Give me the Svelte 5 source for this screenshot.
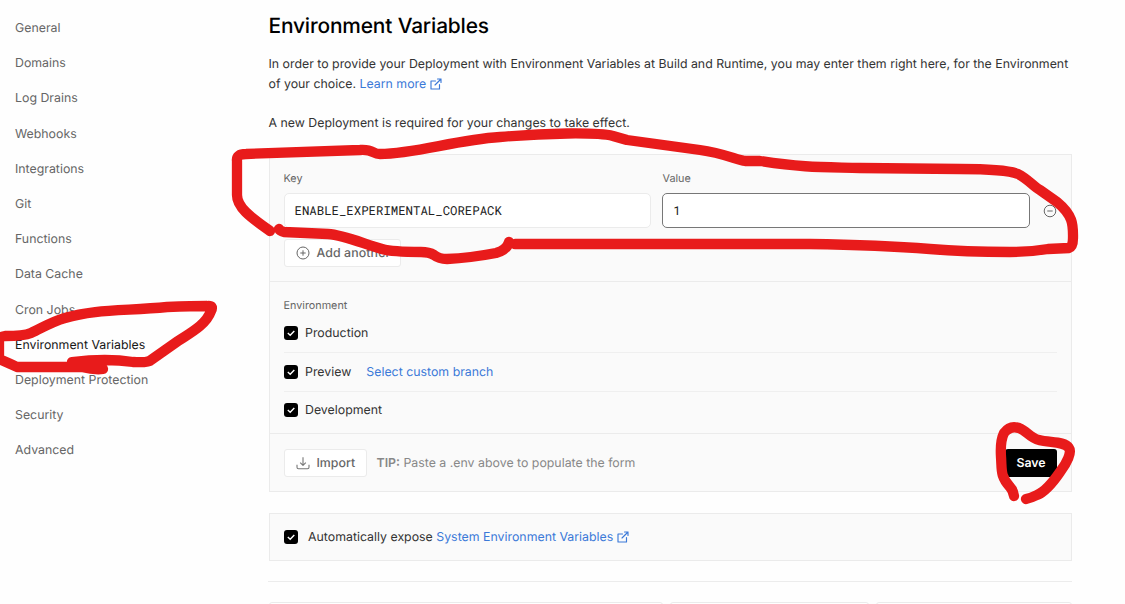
<script>
  const nav = ['General', 'Domains', 'Log Drains', 'Webhooks', 'Integrations', 'Git', 'Functions', 'Data Cache', 'Cron Jobs', 'Environment Variables', 'Deployment Protection', 'Security', 'Advanced'];
  const active = 'Environment Variables';
  const environments = [
    { name: 'Production' },
    { name: 'Preview', link: 'Select custom branch' },
    { name: 'Development' }
  ];
  const strokes = [
    'M270 231 C252 218 237 208 237 195 L237 161 Q236 154 246 154 L360 150 C374 149 372 154 380 154 C415 154 455 140 500 137 C545 133 597 132 613 136 L627 140 L700 150 C723 153 737 160 745 161 L760 161 C805 168 825 167 860 168 L960 169 Q1006 169 1018 174 C1028 179 1033 186 1040 190 L1057 202 C1074 216 1073 226 1073 238 Q1073 247 1069 248 L1048 249 Q1030 252 1010 252 Q965 252 930 249 Q880 245 810 244 L515 244',
    'M509 242 Q507 250 496 253 Q470 258 447 259 Q439 259 434 255 Q429 252 421 252 Q392 252 382 249 C364 244 344 235 328 234 L284 232 Q280 231 279 229',
    'M103 369 Q94 370 82 367 L67 367 L17 367 Q11 364 -1 359 L-1 341 Q-1 337 5 336 Q24 336 31 333 C42 328 51 322 65 318 C94 309 125 311 167 307 Q193 306 207 306 Q214 305 211 311 C206 325 190 333 178 341 L151 360 Q148 363 133 362 Q107 358 72 362',
    'M1014 496 Q1013 490 1010 487 C1000 476 1002 470 1001 457 Q1000 441 1004 433 Q1010 425 1019 428 C1027 431 1030 438 1039 440 C1050 443 1064 441 1069 448 C1072 452 1067 463 1060 472 Q1047 491 1037 495 Q1031 498 1026 499'
  ];
</script>

{#snippet external()}
  <svg class="ext" viewBox="0 0 24 24" fill="none" stroke="currentColor" stroke-width="2.3" stroke-linecap="round" stroke-linejoin="round"><path d="M19 13v9H2V6h9M15 2h7v7M10 14 22 2" /></svg>
{/snippet}

{#snippet check()}
  <span class="check"><svg viewBox="0 0 14 14" fill="none" stroke="#fff" stroke-width="1.4"><path d="M3.8 7 6.2 9.2 10.3 4.9" /></svg></span>
{/snippet}

<div class="page">
  <nav>
    {#each nav as item}
      <a class:active={item === active}>{item}</a>
    {/each}
  </nav>

  <main>
    <h1>Environment Variables</h1>
    <p class="intro">In order to provide your Deployment with Environment Variables at Build and Runtime, you may enter them right here, for the Environment<br />of your choice. <a class="link">Learn more {@render external()}</a></p>
    <p class="notice">A new Deployment is required for your changes to take effect.</p>

    <section class="card">
      <div class="fields">
        <div class="labels"><span>Key</span><span>Value</span></div>
        <div class="inputs">
          <div class="input mono">ENABLE_EXPERIMENTAL_COREPACK</div>
          <div class="input focus mono">1</div>
          <svg class="minus" viewBox="0 0 14 14" fill="none" stroke="#666" stroke-width="1"><circle cx="7" cy="7" r="5.8" /><path d="M4.3 7h5.4" /></svg>
        </div>
        <div class="button add">
          <svg viewBox="0 0 14 14" fill="none" stroke="#666" stroke-width="1"><circle cx="7" cy="7" r="6" /><path d="M4.3 7h5.4M7 4.3v5.4" /></svg>
          <span>Add another</span>
        </div>
      </div>
      <div class="envs">
        <span class="label">Environment</span>
        {#each environments as env}
          <div class="env">
            {@render check()}
            <span class="name">{env.name}</span>
            {#if env.link}<a class="link">{env.link}</a>{/if}
          </div>
        {/each}
      </div>
      <footer>
        <div class="button import">
          <svg viewBox="0 0 14 14" fill="none" stroke="#777" stroke-width="1.1" stroke-linejoin="round"><path d="M1 8.7v2.6q0 1.5 1.5 1.5h9q1.5 0 1.5-1.5V8.7M7 1.3v8M4.2 6.6 7 9.4l2.8-2.8" /></svg>
          <span>Import</span>
        </div>
        <span class="tip"><b>TIP:</b> Paste a .env above to populate the form</span>
        <div class="save"><span>Save</span></div>
      </footer>
    </section>

    <section class="expose">
      {@render check()}
      <span class="text">Automatically expose <a class="link">System Environment Variables {@render external()}</a></span>
    </section>

    <hr />
    <div class="filters"><i></i><i></i><i></i></div>
  </main>

  <svg class="ink" viewBox="0 0 1125 604" fill="none" stroke="#e81b1b" stroke-width="10.3" stroke-linecap="round" stroke-linejoin="round">
    {#each strokes as d}<path {d} />{/each}
  </svg>
</div>

<style>
  :global(body) { background: #fefefe; }
  .page { position: relative; display: flex; width: 1125px; height: 604px; overflow: hidden; box-sizing: border-box; font: 12.35px/20px Inter, sans-serif; letter-spacing: 0; color: #333; text-rendering: geometricPrecision; }
  .page * { box-sizing: border-box; }
  nav { width: 268.5px; padding: 10px 0 0 15px; display: flex; flex-direction: column; flex: none; }
  nav a { height: 35.2px; line-height: 35.2px; color: #666; }
  nav .active { color: #171717; }
  main { width: 803.5px; flex: none; }
  h1 { margin: 11px 0 0; font-size: 20.9px; line-height: 32px; font-weight: 500; letter-spacing: -0.16px; color: #000; white-space: nowrap; }
  p { margin: 0; white-space: nowrap; }
  .intro { margin-top: 11px; line-height: 19.5px; }
  .notice { margin-top: 20px; }
  .link { color: #3b79d8; }
  .ext { width: 12px; height: 12px; vertical-align: -2px; }
  .card { margin-top: 21px; height: 338px; border: 1px solid #ebebeb; background: #fafafa; }
  .fields { height: 127px; padding: 14px 14px 0; border-bottom: 1px solid #ebebeb; }
  .labels { display: flex; font-size: 10.8px; color: #666; }
  .labels span { width: 379px; }
  .labels span + span { width: auto; }
  .inputs { display: flex; align-items: center; gap: 11px; margin-top: 4px; }
  .input { width: 368.3px; height: 35px; border: 1px solid #ebebeb; border-radius: 5px; background: #fff; padding: 0 10px; line-height: 34px; }
  .focus { border-color: #777; }
  .mono { font-family: Roboto Mono, "DejaVu Sans Mono", monospace; font-size: 12.35px; letter-spacing: 0; color: #222; }
  .minus { width: 14px; height: 14px; margin-left: 2px; }
  .button { display: flex; align-items: center; height: 28px; border: 1px solid #ebebeb; border-radius: 3px; background: #fff; font-weight: 500; color: #666; padding-left: 11px; gap: 7px; white-space: nowrap; }
  .button svg { width: 14px; height: 14px; }
  .add { width: 117px; margin-top: 11px; letter-spacing: 0.1px; }
  .envs { height: 152px; padding: 14px 14px 0; border-bottom: 1px solid #ebebeb; }
  .label { display: block; font-size: 10.8px; color: #666; margin-bottom: -1px; }
  .env { height: 38.4px; display: flex; align-items: center; border-bottom: 1px solid #efefef; padding-bottom: 1px; }
  .env:last-child { border: 0; }
  .check { width: 14px; height: 14px; border-radius: 3px; background: #000; display: flex; flex: none; margin-left: 0.5px; }
  .check svg { width: 14px; height: 14px; }
  .name { margin-left: 7px; }
  .env .link { margin-left: 15px; }
  footer { height: 57px; padding: 0 14px; display: flex; align-items: center; }
  .import { width: 83px; }
  .tip { margin-left: 10px; color: #888; }
  .tip b { font-weight: 600; }
  .save { margin-left: auto; width: 52px; height: 28px; background: #000; color: #fff; font-weight: 600; border-radius: 3px; line-height: 28px; text-align: center; }
  .expose { margin-top: 21px; height: 48px; border: 1px solid #ebebeb; background: #fafafa; display: flex; align-items: center; padding: 0 0 1px 14px; }
  .text { margin-left: 10px; }
  hr { margin: 20px 0 0 -1px; border: 0; height: 1px; background: #ececec; }
  .filters { display: grid; grid-template-columns: 394px 199px 196px; gap: 7px; margin-top: 20px; }
  .filters i { height: 30px; border: 1px solid #ebebeb; border-radius: 3px; background: #fff; }
  .ink { position: absolute; inset: 0; width: 1125px; height: 604px; }
</style>
